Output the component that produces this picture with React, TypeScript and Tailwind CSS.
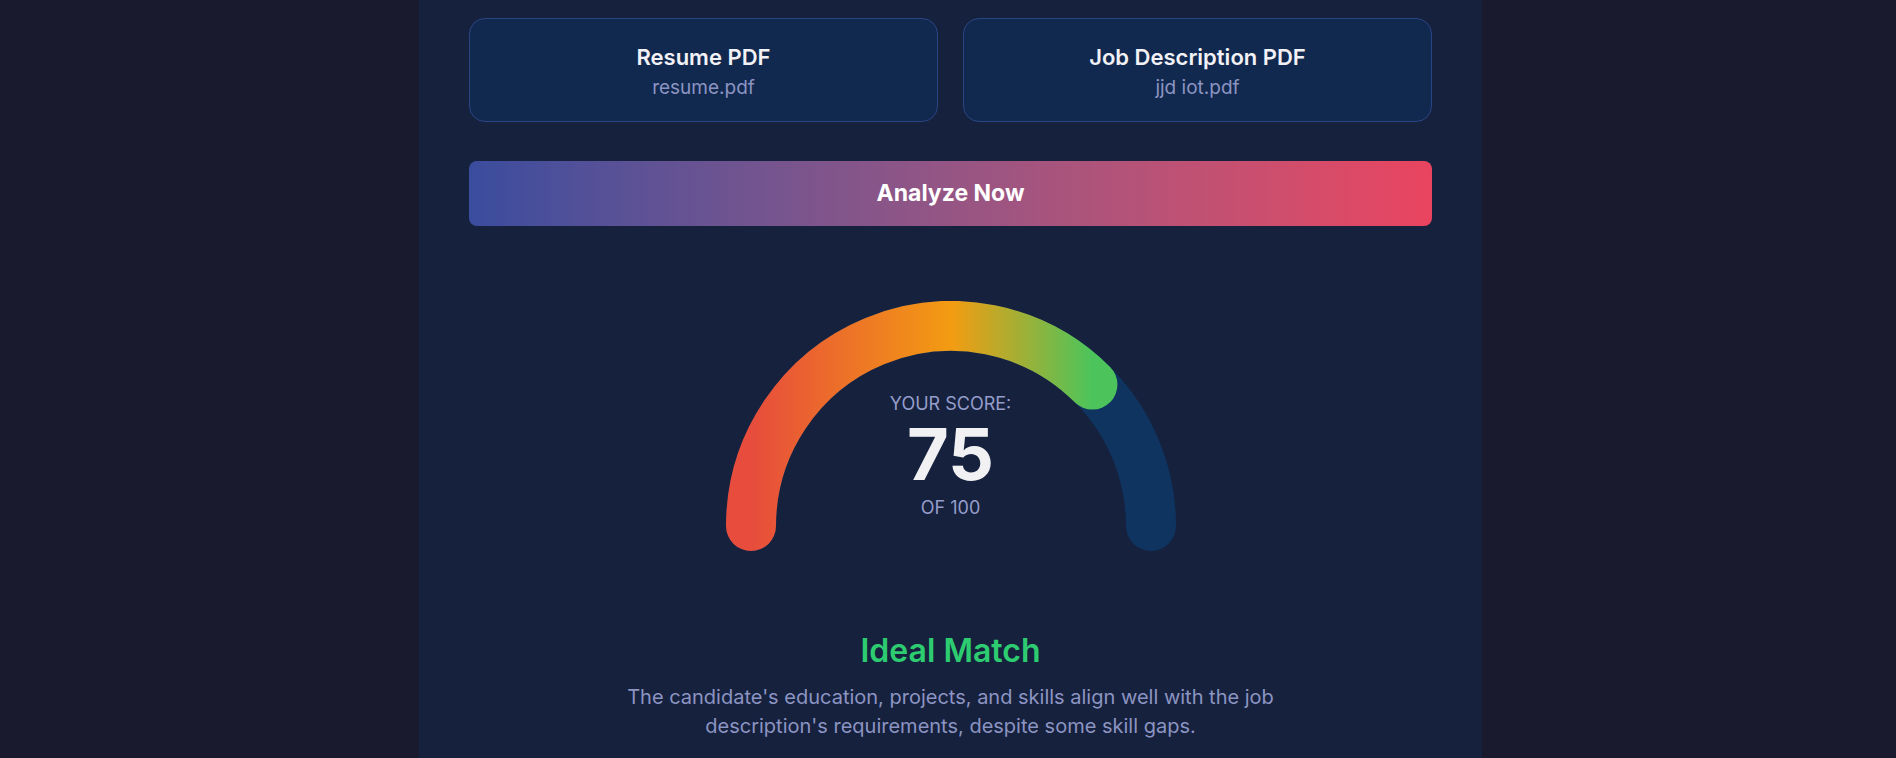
export default function App() {
  const score = 75;
  const cx = 225;
  const cy = 225;
  const r = 200;
  const angle = Math.PI - (score / 100) * Math.PI;
  const ex = cx + r * Math.cos(angle);
  const ey = cy - r * Math.sin(angle);

  return (
    <div
      className="flex min-h-screen justify-center bg-[#1a1a2e] pl-[5px]"
      style={{ fontFamily: 'Inter, "Noto Sans", sans-serif' }}
    >
      <div className="min-h-screen w-[1063px] bg-[#16213e] px-[50px] pt-[18px] pb-10">
        <div className="grid grid-cols-2 gap-[25px]">
          {[
            { title: 'Resume PDF', file: 'resume.pdf' },
            { title: 'Job Description PDF', file: 'jjd iot.pdf' },
          ].map((c) => (
            <div
              key={c.title}
              className="flex h-[104px] flex-col items-center justify-center gap-[10px] rounded-[16px] border border-[#2a4584] bg-[#12294f] pt-[3px]"
            >
              <div className="text-[22px] leading-none font-semibold text-[#f1f1f6]">
                {c.title}
              </div>
              <div className="text-[19px] leading-none text-[#8c94c2]">{c.file}</div>
            </div>
          ))}
        </div>

        <button className="mt-[39px] flex h-[65px] w-full items-center justify-center rounded-[8px] bg-gradient-to-r from-[#3a4c9e] to-[#e9445f] text-[23px] font-bold text-white">
          Analyze Now
        </button>

        <div className="relative mx-auto mt-[75px] h-[250px] w-[450px]">
          <svg width="450" height="250" viewBox="0 0 450 250">
            <defs>
              <linearGradient id="g" gradientUnits="userSpaceOnUse" x1="25" y1="0" x2="366" y2="0">
                <stop offset="0%" stopColor="#e74c3c" />
                <stop offset="59%" stopColor="#f39c12" />
                <stop offset="100%" stopColor="#4cc45b" />
              </linearGradient>
            </defs>
            <path
              d="M 25 225 A 200 200 0 0 1 425 225"
              fill="none"
              stroke="#0f3460"
              strokeWidth="50"
              strokeLinecap="round"
            />
            <path
              d={`M 25 225 A 200 200 0 0 1 ${ex.toFixed(2)} ${ey.toFixed(2)}`}
              fill="none"
              stroke="url(#g)"
              strokeWidth="50"
              strokeLinecap="round"
            />
          </svg>
          <div className="absolute top-[94px] right-0 left-0 flex flex-col items-center">
            <div className="text-[18px] leading-none text-[#959dcb]">YOUR SCORE:</div>
            <div className="mt-[5px] text-[72px] leading-none font-bold text-[#f1f1f4]">{score}</div>
            <div className="mt-[9px] text-[18px] leading-none text-[#959dcb]">OF 100</div>
          </div>
        </div>

        <div className="mt-[84px] flex flex-col items-center">
          <div className="text-[32px] leading-none font-semibold text-[#2ecc71]">Ideal Match</div>
          <p className="mt-[16px] max-w-[700px] text-center text-[20px] leading-[29px] text-[#8c94c2]">
            The candidate's education, projects, and skills align well with the job
            description's requirements, despite some skill gaps.
          </p>
        </div>
      </div>
    </div>
  );
}
